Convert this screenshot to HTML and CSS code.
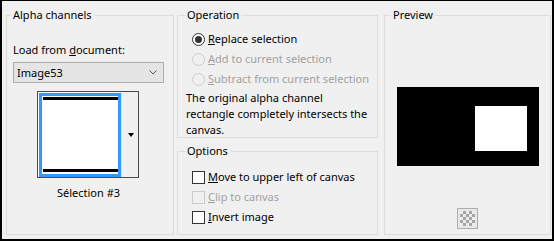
FILE: index.html
```html
<!DOCTYPE html>
<html>
<head>
<meta charset="utf-8">
<link rel="stylesheet" href="styles.css">
</head>
<body>
<div class="dialog">
  <fieldset class="group alpha">
    <legend>Alpha channels</legend>
    <div class="body">
      <div class="label">Load from <u>d</u>ocument:</div>
      <div class="select">
        <span>Image53</span>
        <svg class="chev" width="8" height="5" viewBox="0 0 8 5"><path d="M0.5 0.5 L4 4 L7.5 0.5" fill="none" stroke="#555" stroke-width="1"/></svg>
      </div>
      <div class="swatch">
        <div class="swatch-view"><div class="bar"></div><div class="bar"></div></div>
        <div class="swatch-btn"><span class="tri"></span></div>
      </div>
      <div class="caption">Sélection #3</div>
    </div>
  </fieldset>
  <div class="middle">
    <fieldset class="group op">
      <legend>Operation</legend>
      <div class="body">
        <div class="row"><span class="radio checked"></span><span><u>R</u>eplace selection</span></div>
        <div class="row disabled"><span class="radio"></span><span><u>A</u>dd to current selection</span></div>
        <div class="row disabled"><span class="radio"></span><span><u>S</u>ubtract from current selection</span></div>
        <div class="desc">The original alpha channel<br>rectangle completely intersects the<br>canvas.</div>
      </div>
    </fieldset>
    <fieldset class="group options">
      <legend>Options</legend>
      <div class="body">
        <div class="row"><span class="check"></span><span><u>M</u>ove to upper left of canvas</span></div>
        <div class="row disabled"><span class="check"></span><span><u>C</u>lip to canvas</span></div>
        <div class="row"><span class="check"></span><span><u>I</u>nvert image</span></div>
      </div>
    </fieldset>
  </div>
  <fieldset class="group preview">
    <legend>Preview</legend>
    <div class="body">
      <div class="pv-black"><div class="pv-white"></div></div>
      <div class="checker"><div class="checker-in"></div></div>
    </div>
  </fieldset>
</div>
</body>
</html>
```
FILE: styles.css
```css
html, body {
  margin: 0;
  padding: 0;
  background: #f0f0f0;
}

.dialog {
  width: 554px;
  height: 241px;
  box-sizing: border-box;
  border: solid #000;
  border-width: 1px 2px 2px 2px;
  background: #f0f0f0;
  display: flex;
  align-items: stretch;
  padding: 6px 1px 4px 4px;
  font-family: "Noto Sans", sans-serif;
  font-size: 11px;
  line-height: 16px;
  color: #000;
}

.group {
  margin: 0;
  padding: 0;
  border: 1px solid #dcdcdc;
  min-width: 0;
  box-sizing: border-box;
}

.group legend {
  padding: 0 2px;
  line-height: 16px;
}

.alpha {
  width: 168px;
  margin-right: 3px;
}
.alpha legend { margin-left: 4px; }

.alpha .body {
  padding: 19px 0 0 6px;
}

.label {
  height: 16px;
}

.select {
  margin-top: 4px;
  width: 151px;
  height: 21px;
  box-sizing: border-box;
  border: 1px solid #adadad;
  background: #e5e5e5;
  display: flex;
  align-items: center;
  justify-content: space-between;
  padding: 0 6px 0 3px;
}

.chev { display: block; }

.swatch {
  margin-top: 8px;
  margin-left: 24px;
  width: 102px;
  height: 87px;
  box-sizing: border-box;
  border: 1px solid #4a4a4a;
  background: #fff;
  padding: 1px 0 0 1px;
  display: flex;
}

.swatch-view {
  width: 82px;
  height: 84px;
  box-sizing: border-box;
  border: 3px solid #3399ff;
  padding: 1px 0 2px 1px;
  display: flex;
  flex-direction: column;
  justify-content: space-between;
}

.bar {
  height: 3px;
  width: 75px;
  background: #000;
}

.swatch-btn {
  flex: 1;
  margin-top: -1px;
  background: #f0f0f0;
  border-left: 1px solid #e3e3e3;
  display: flex;
  align-items: center;
  justify-content: center;
  padding-left: 2px;
}

.tri {
  width: 0;
  height: 0;
  border-left: 3.5px solid transparent;
  border-right: 3.5px solid transparent;
  border-top: 4px solid #000;
}

.caption {
  margin-top: 7px;
  width: 151px;
  text-align: center;
}

.middle {
  width: 201px;
  margin-right: 6px;
  display: flex;
  flex-direction: column;
}

.op {
  height: 131px;
}
.op legend, .options legend { margin-left: 7px; }

.op .body {
  padding: 6px 0 0 8px;
}

.row {
  height: 20px;
  display: flex;
  align-items: center;
}

.radio, .check {
  width: 13px;
  height: 13px;
  box-sizing: border-box;
  margin-left: 6px;
  margin-right: 3px;
  background: #fff;
  border: 1px solid #333;
  flex: none;
}

.radio {
  border-radius: 50%;
  display: flex;
  align-items: center;
  justify-content: center;
}

.radio.checked::after {
  content: "";
  width: 7px;
  height: 7px;
  border-radius: 50%;
  background: #333;
}

.disabled {
  color: #a0a0a0;
}
.disabled .radio, .disabled .check {
  border-color: #cccccc;
  background: #f0f0f0;
}

.desc {
  margin-top: 1px;
}

.options {
  flex: 1;
  margin-top: 5px;
}

.options .body {
  padding: 8px 0 0 8px;
}

.preview {
  width: 167px;
}
.preview legend { margin-left: 6px; }

.preview .body {
  display: flex;
  flex-direction: column;
  align-items: center;
}

.pv-black {
  margin-top: 64px;
  width: 142px;
  height: 79px;
  background: #000;
  padding: 19px 0 0 78px;
  box-sizing: border-box;
}

.pv-white {
  width: 52px;
  height: 45px;
  background: #fff;
}

.checker {
  margin-top: 42px;
  width: 21px;
  height: 21px;
  box-sizing: border-box;
  border: 1px solid #adadad;
  background: #e8e8e8;
  padding: 2px;
}

.checker-in {
  width: 15px;
  height: 15px;
  background: repeating-conic-gradient(#a6a6a6 0 25%, #ececec 0 50%) 0 0 / 6px 6px;
}
```
